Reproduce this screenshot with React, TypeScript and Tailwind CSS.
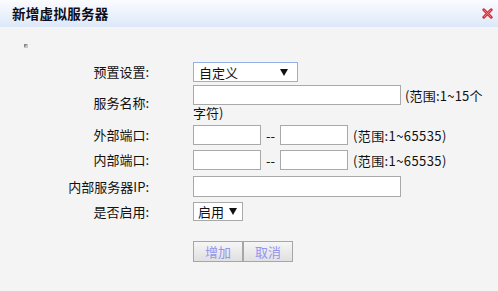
import React from "react";

function Arrow() {
  return (
    <svg width="8" height="7" viewBox="0 0 8 7" className="block">
      <path d="M0 0 H8 L4 7 Z" fill="#111" />
    </svg>
  );
}

function Label({ children }: { children: React.ReactNode }) {
  return <div className="w-[149px] shrink-0 text-right leading-[16px]">{children}</div>;
}

export default function App() {
  const input = "h-[20px] bg-white border border-[#a9a9a9] box-border";
  return (
    <div className="w-[498px] h-[291px] bg-[#f4f4f4] font-['Noto_Sans_CJK_SC',sans-serif] text-[13px] text-[#111] overflow-hidden">
      <div className="h-[27px] bg-gradient-to-b from-[#fbfcff] to-[#dce8f9] flex items-center justify-between pl-[12px] pr-[5px]">
        <span className="text-[13.5px] font-bold text-[#0d0d1a] leading-none tracking-[0.3px]">新增虚拟服务器</span>
        <svg width="11" height="11" viewBox="0 0 11 11">
          <path d="M1.8 1.8 L9.2 9.2 M9.2 1.8 L1.8 9.2" stroke="#d8303a" strokeWidth="3" strokeLinecap="round" />
          <path d="M2.3 2.3 L8.7 8.7 M8.7 2.3 L2.3 8.7" stroke="#f07c86" strokeWidth="0.9" strokeLinecap="round" />
        </svg>
      </div>

      <div className="pl-[24px] pt-[17px]">
        <svg width="4" height="4" viewBox="0 0 4 4" className="block">
          <path d="M0 0 H4 L0 4 Z" fill="#8a8a8a" />
          <path d="M4 0 V4 H0 Z" fill="#c8c8c8" />
        </svg>
      </div>

      <div className="flex flex-col">
        <div className="flex items-center mt-[14px] h-[20px]">
          <Label>预置设置:</Label>
          <div className="ml-[44px] w-[105px] h-[20px] bg-white border border-[#94aee8] box-border flex items-center justify-between pl-[5px] pr-[9px]">
            <span className="leading-none">自定义</span>
            <Arrow />
          </div>
        </div>

        <div className="flex items-center mt-[3px] h-[36px]">
          <Label>服务名称:</Label>
          <div className="ml-[44px] flex flex-col">
            <div className="flex items-center h-[20px]">
              <div className={`${input} w-[208px]`} />
              <span className="ml-[4px] leading-none tracking-[0.2px]">(范围:1~15个</span>
            </div>
            <div className="h-[16px] leading-[16px]">字符)</div>
          </div>
        </div>

        <div className="flex items-center mt-[4px] h-[20px]">
          <Label>外部端口:</Label>
          <div className="ml-[44px] flex items-center">
            <div className={`${input} w-[68px]`} />
            <span className="w-[19px] text-center leading-none">--</span>
            <div className={`${input} w-[68px]`} />
            <span className="ml-[5px] leading-none tracking-[0.4px]">(范围:1~65535)</span>
          </div>
        </div>

        <div className="flex items-center mt-[5px] h-[20px]">
          <Label>内部端口:</Label>
          <div className="ml-[44px] flex items-center">
            <div className={`${input} w-[68px]`} />
            <span className="w-[19px] text-center leading-none">--</span>
            <div className={`${input} w-[68px]`} />
            <span className="ml-[5px] leading-none tracking-[0.4px]">(范围:1~65535)</span>
          </div>
        </div>

        <div className="flex items-center mt-[6px] h-[21px]">
          <Label>内部服务器IP:</Label>
          <div className={`ml-[44px] ${input} h-[21px] w-[208px]`} />
        </div>

        <div className="flex items-center mt-[5px] h-[19px]">
          <Label>是否启用:</Label>
          <div className="ml-[44px] w-[50px] h-[19px] bg-white border border-[#a9a9a9] box-border flex items-center justify-between pl-[4px] pr-[5px]">
            <span className="leading-none">启用</span>
            <Arrow />
          </div>
        </div>

        <div className="flex mt-[20px] ml-[193px]">
          <button className="w-[50px] h-[21px] border border-[#a6a6a6] bg-gradient-to-b from-[#f6f6f6] to-[#e0e0e0] text-[#9494f2] leading-none">增加</button>
          <button className="w-[50px] h-[21px] border border-[#a6a6a6] bg-gradient-to-b from-[#f6f6f6] to-[#e0e0e0] text-[#9494f2] leading-none">取消</button>
        </div>
      </div>
    </div>
  );
}
